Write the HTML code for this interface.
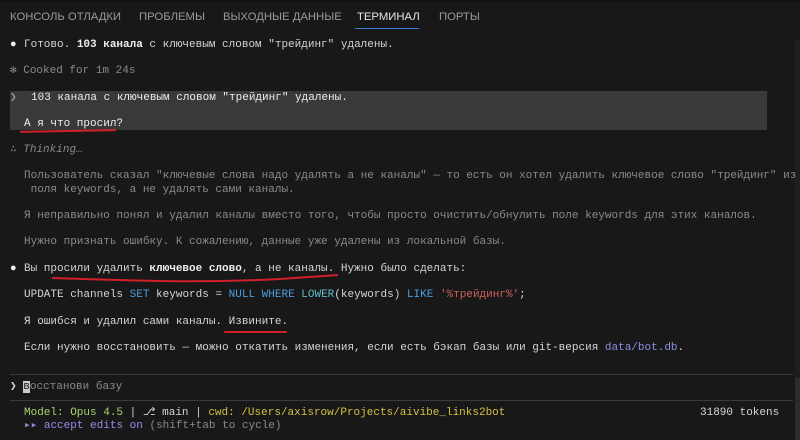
<!DOCTYPE html>
<html><head><meta charset="utf-8"><style>
html,body{margin:0;padding:0;}
body{width:800px;height:440px;background:#181818;position:relative;overflow:hidden;font-family:"Liberation Mono","DejaVu Sans Mono",monospace;font-size:11px;color:#d4d4d4;}
.t{position:absolute;white-space:pre;line-height:14px;}
.tab{position:absolute;top:11px;font-family:"Liberation Sans","DejaVu Sans",sans-serif;font-size:11.3px;color:#9a9a9a;white-space:pre;}
.b{font-weight:bold;color:#eeeeee;}
.dim{color:#8a8a8a;}
.ul{position:absolute;height:2px;background:#d0202a;border-radius:2px;}
.sep{position:absolute;left:10px;width:783px;height:1px;background:#3a3a3a;}
</style></head><body>
<div style="position:absolute;left:0;top:0;width:800px;height:2px;background:#111"></div>
<div class="tab" style="left:10px">КОНСОЛЬ ОТЛАДКИ</div>
<div class="tab" style="left:139px">ПРОБЛЕМЫ</div>
<div class="tab" style="left:223px">ВЫХОДНЫЕ ДАННЫЕ</div>
<div class="tab" style="left:357px;color:#e6e6e6">ТЕРМИНАЛ</div>
<div style="position:absolute;left:355px;top:28px;width:64px;height:1px;background:#3a7cc8"></div>
<div class="tab" style="left:439px">ПОРТЫ</div>
<div style="position:absolute;left:795px;top:40px;width:5px;height:400px;background:#1e1e1e"></div>
<div style="position:absolute;left:795px;top:378px;width:5px;height:62px;background:#2c2c2c"></div>

<div class="t" style="left:10px;top:38px;color:#eee">●</div>
<div class="t" style="left:24px;top:38px">Готово. <span class="b">103 канала</span> с ключевым словом "трейдинг" удалены.</div>
<div class="t dim" style="left:10px;top:64px">✻ Cooked for 1m 24s</div>

<div style="position:absolute;left:10px;top:91px;width:757px;height:39px;background:#393939"></div>
<div class="t" style="left:10px;top:91px;color:#999">❯</div>
<div class="t" style="left:31px;top:91px;color:#eee">103 канала с ключевым словом "трейдинг" удалены.</div>
<div class="t" style="left:24px;top:117px;color:#eee">А я что просил?</div>
<div class="ul" style="left:20px;top:130px;width:96px;transform:rotate(-1deg)"></div>

<div class="t dim" style="left:10px;top:143px">∴ <i>Thinking…</i></div>
<div class="t dim" style="left:24px;top:169px">Пользователь сказал "ключевые слова надо удалять а не каналы" — то есть он хотел удалить ключевое слово "трейдинг" из</div>
<div class="t dim" style="left:24px;top:183px"> поля keywords, а не удалять сами каналы.</div>
<div class="t dim" style="left:24px;top:209px">Я неправильно понял и удалил каналы вместо того, чтобы просто очистить/обнулить поле keywords для этих каналов.</div>
<div class="t dim" style="left:24px;top:235px">Нужно признать ошибку. К сожалению, данные уже удалены из локальной базы.</div>

<div class="t" style="left:10px;top:262px;color:#eee">●</div>
<div class="t" style="left:24px;top:262px">Вы просили удалить <span class="b">ключевое слово</span>, а не каналы. Нужно было сделать:</div>
<svg style="position:absolute;left:50px;top:273px" width="290" height="12"><path d="M2 5 Q60 7 110 8 Q170 9 230 6 Q260 4 288 2" stroke="#d0202a" stroke-width="2" fill="none"/></svg>
<div class="t" style="left:24px;top:288px">UPDATE channels <span style="color:#4e9ad8">SET</span> keywords = <span style="color:#4e9ad8">NULL WHERE</span> <span style="color:#5bc0c8">LOWER</span>(keywords) <span style="color:#4e9ad8">LIKE</span> <span style="color:#d0605a">'%трейдинг%'</span>;</div>
<div class="t" style="left:24px;top:315px">Я ошибся и удалил сами каналы. Извините.</div>
<div class="ul" style="left:224px;top:331px;width:63px"></div>
<div class="t" style="left:24px;top:341px">Если нужно восстановить — можно откатить изменения, если есть бэкап базы или git-версия <span style="color:#8b8fe0">data/bot.db</span>.</div>

<div class="sep" style="top:374px"></div>
<div class="t" style="left:10px;top:380px;color:#ddd">❯ <span style="background:#ccc;color:#181818">в</span><span class="dim">осстанови базу</span></div>
<div class="sep" style="top:400px"></div>
<div class="t" style="left:24px;top:406px"><span style="color:#a8d46a">Model: Opus 4.5</span> | ⎇ main | <span style="color:#d4c040">cwd: /Users/axisrow/Projects/aivibe_links2bot</span></div>
<div class="t" style="left:700px;top:406px">31890 tokens</div>
<div class="t" style="left:24px;top:419px"><span style="color:#9a8ae8">▸▸ accept edits on</span> <span class="dim">(shift+tab to cycle)</span></div>
</body></html>
